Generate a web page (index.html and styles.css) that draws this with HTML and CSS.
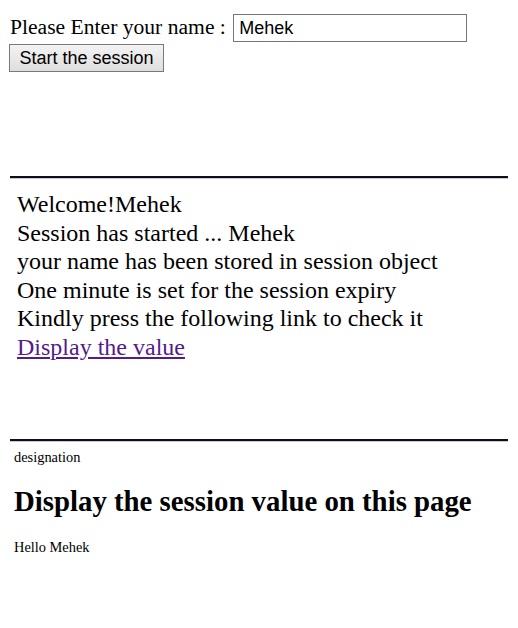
FILE: index.html
```html
<!DOCTYPE html>
<html>
<head>
<meta charset="utf-8">
<title>Session</title>
<link rel="stylesheet" href="styles.css">
</head>
<body>
<div class="top">
  <div class="name-row">Please Enter your name : <input class="name-input" type="text" value="Mehek"></div>
  <div class="btn-row"><button class="start-btn" type="button">Start the session</button></div>
</div>
<section class="frame frame-one">
  <div class="msg">Welcome!Mehek</div>
  <div class="msg">Session has started ... Mehek</div>
  <div class="msg">your name has been stored in session object</div>
  <div class="msg">One minute is set for the session expiry</div>
  <div class="msg">Kindly press the following link to check it</div>
  <div class="msg"><a class="link" href="#">Display the value</a></div>
</section>
<section class="frame frame-two">
  <div class="small">designation</div>
  <h1 class="title">Display the session value on this page</h1>
  <div class="small">Hello Mehek</div>
</section>
</body>
</html>
```
FILE: styles.css
```css
html, body {
  background: #ffffff;
}
body {
  margin: 0;
  font-family: "Liberation Serif", "Times New Roman", serif;
  color: #000;
}
.top {
  padding: 14px 0 0 10px;
  font-size: 21.6px;
}
.name-row {
  line-height: 24px;
}
.name-input {
  box-sizing: border-box;
  width: 234px;
  height: 28px;
  margin: 0 0 0 2px;
  padding: 0 5px;
  border: 1px solid #767676;
  border-radius: 0;
  font-family: "Liberation Sans", Arial, sans-serif;
  font-size: 18px;
  color: #000;
  vertical-align: baseline;
  outline: none;
}
.btn-row {
  display: flex;
  margin-top: 2px;
  margin-left: -1px;
}
.start-btn {
  box-sizing: border-box;
  height: 28px;
  width: 155px;
  margin: 0;
  padding: 0 9px;
  border: 1px solid #7a7a7a;
  border-radius: 0;
  background: linear-gradient(#f3f3f3, #dedede);
  font-family: "Liberation Sans", Arial, sans-serif;
  font-size: 18px;
  color: #000;
}
.frame {
  box-sizing: border-box;
  margin-left: 10px;
  width: 498px;
  border-top: 2px solid #0e0e1c;
  box-shadow: inset 0 1px 0 #c9c9c9;
}
.frame-one {
  height: 263px;
  margin-top: 104px;
  padding: 12px 0 0 7px;
  font-size: 24px;
  line-height: 28.5px;
}
.link {
  color: #551a8b;
  text-decoration: underline;
}
.frame-two {
  padding: 8px 0 0 4px;
}
.small {
  font-size: 14.4px;
  line-height: 16px;
}
.title {
  margin: 20px 0 21px 0;
  font-size: 28.8px;
  font-weight: bold;
  line-height: 33px;
}
```
